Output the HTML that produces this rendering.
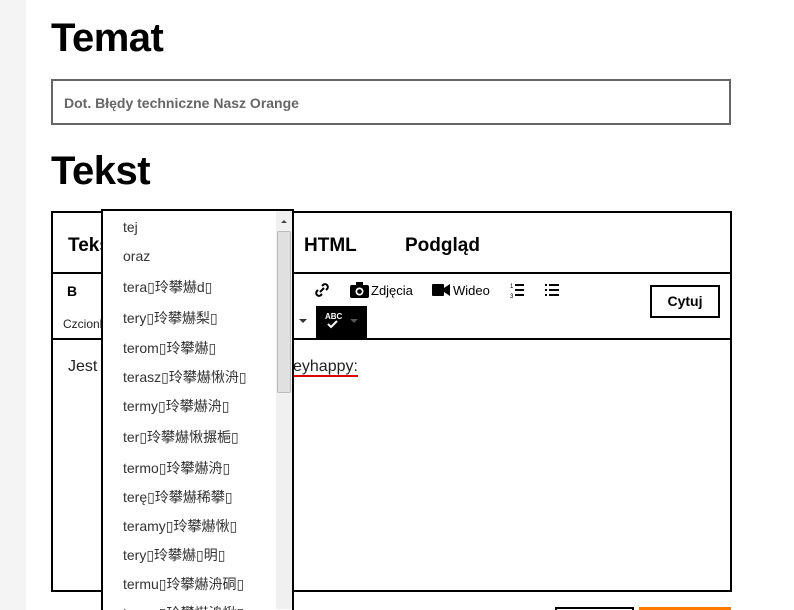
<!DOCTYPE html>
<html style="width:794px;height:610px;overflow:hidden"><head><meta charset="utf-8"><style>
*{margin:0;padding:0;box-sizing:border-box}
body{width:794px;height:610px;overflow:hidden;background:#fff;font-family:"Liberation Sans",Arial,sans-serif;position:relative}
.a{position:absolute}
h1{position:absolute;font-size:40px;font-weight:bold;color:#000;letter-spacing:-0.5px}
.dd div{position:absolute;left:20px;font-size:14px;color:#333;font-family:"Liberation Sans","Noto Sans CJK SC",sans-serif;white-space:nowrap}
</style></head><body>
<div class="a" style="left:0;top:0;width:26px;height:610px;background:#f4f4f4"></div>
<h1 style="left:51px;top:16px">Temat</h1>
<div class="a" style="left:51px;top:79px;width:680px;height:46px;border:2px solid #666"></div>
<div class="a" style="left:64px;top:95px;font-size:14px;font-weight:bold;color:#666">Dot. Błędy techniczne Nasz Orange</div>
<h1 style="left:51px;top:149px">Tekst</h1>
<div class="a" style="left:51px;top:211px;width:681px;height:381px;border:2px solid #000"></div>
<div class="a" style="left:51px;top:272px;width:681px;height:68px;border-top:2px solid #000;border-bottom:2px solid #000"></div>
<div class="a" style="left:68px;top:235px;font-size:19px;font-weight:bold">Tekst</div>
<div class="a" style="left:304px;top:235px;font-size:19px;font-weight:bold">HTML</div>
<div class="a" style="left:405px;top:235px;font-size:19px;font-weight:bold">Podgląd</div>
<div class="a" style="left:67px;top:283px;font-size:14px;font-weight:bold">B</div>
<div class="a" style="left:63px;top:317px;font-size:12px;color:#222">Czcionka</div>
<div class="a" style="left:68px;top:358px;font-size:16px;color:#222">Jest</div>
<svg class="a" style="left:314px;top:282px" width="16" height="16" viewBox="0 0 16 16"><path d="M6 10l4-4M4 8l-1 1a2.5 2.5 0 0 0 4 4l1-1M12 8l1-1a2.5 2.5 0 0 0-4-4l-1 1" stroke="#000" stroke-width="2" fill="none"/></svg>
<svg class="a" style="left:350px;top:282px" width="19" height="16" viewBox="0 0 19 16"><rect x="0" y="3" width="19" height="13" rx="2"/><rect x="6" y="0" width="7" height="4"/><circle cx="9.5" cy="9.5" r="4" fill="#fff"/><circle cx="9.5" cy="9.5" r="2.3"/></svg>
<div class="a" style="left:371px;top:283px;font-size:13px">Zdjęcia</div>
<svg class="a" style="left:432px;top:284px" width="18" height="12" viewBox="0 0 18 12"><rect x="0" y="0" width="12" height="12" rx="1"/><path d="M12 4l6-4v12l-6-4z"/></svg>
<div class="a" style="left:453px;top:283px;font-size:13px">Wideo</div>
<svg class="a" style="left:510px;top:282px" width="14" height="16" viewBox="0 0 14 16"><path d="M5 3h9M5 8h9M5 13h9" stroke="#000" stroke-width="2"/><text x="0" y="6" font-size="6">1</text><text x="0" y="16" font-size="6">3</text></svg>
<svg class="a" style="left:545px;top:282px" width="14" height="16" viewBox="0 0 14 16"><path d="M4 3h10M4 8h10M4 13h10M0 3h2M0 8h2M0 13h2" stroke="#000" stroke-width="2"/></svg>
<div class="a" style="left:650px;top:285px;width:70px;height:33px;border:2px solid #000;font-size:14px;font-weight:bold;text-align:center;line-height:29px">Cytuj</div>
<div class="a" style="left:299px;top:319px;border:4px solid transparent;border-top:4px solid #333"></div>
<div class="a" style="left:316px;top:306px;width:51px;height:32px;background:#000"></div>
<div class="a" style="left:325px;top:312px;font-size:8px;color:#fff;font-weight:bold">ABC</div>
<svg class="a" style="left:326px;top:320px" width="14" height="9"><path d="M2 4l3 3 6-6" stroke="#fff" stroke-width="2" fill="none"/></svg>
<div class="a" style="left:350px;top:319px;border:4px solid transparent;border-top:4px solid #555"></div>
<div class="a" style="left:293px;top:358px;font-size:16px;color:#222;border-bottom:2px solid #d00;line-height:17px">eyhappy:</div>
<div class="a" style="left:555px;top:607px;width:79px;height:10px;border:2px solid #000"></div>
<div class="a" style="left:639px;top:607px;width:92px;height:5px;background:#ff7900"></div>
<div class="a dd" style="left:101px;top:209px;width:193px;height:410px;border:2px solid #000;background:#fff">
<div style="top:8px">tej</div>
<div style="top:37px">oraz</div>
<div style="top:66px">tera▯玲攀爀d▯</div>
<div style="top:97px">tery▯玲攀爀梨▯</div>
<div style="top:127px">terom▯玲攀爀▯</div>
<div style="top:156px">terasz▯玲攀爀愀洀▯</div>
<div style="top:185px">termy▯玲攀爀洀▯</div>
<div style="top:216px">ter▯玲攀爀愀搌梔▯</div>
<div style="top:247px">termo▯玲攀爀洀▯</div>
<div style="top:276px">terę▯玲攀爀稀攀▯</div>
<div style="top:305px">teramy▯玲攀爀愀▯</div>
<div style="top:334px">tery▯玲攀爀▯明▯</div>
<div style="top:363px">termu▯玲攀爀洀硐▯</div>
<div style="top:392px">termu▯玲攀爀洀愀▯</div>
<div class="a" style="left:173px;top:0;width:16px;height:398px;background:#f0f0f0;border:0"></div>
<div class="a" style="left:174px;top:20px;width:14px;height:162px;background:#e0e0e0;border:1px solid #bbb;border-radius:2px"></div>
<div class="a" style="left:178px;top:6px;border:3px solid transparent;border-bottom:3px solid #444"></div>
</div>
</body></html>
